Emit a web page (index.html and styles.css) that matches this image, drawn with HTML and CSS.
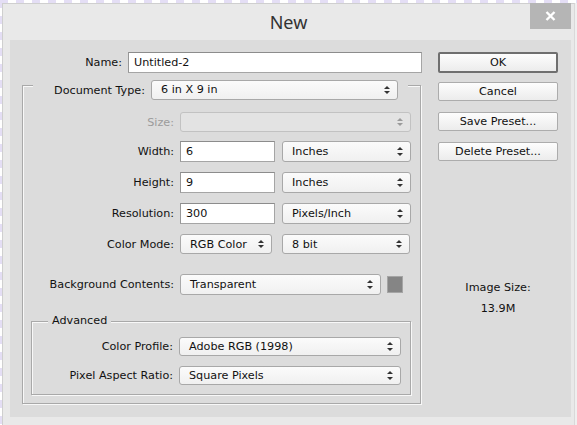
FILE: index.html
```html
<!DOCTYPE html>
<html lang="en">

<head>
    <meta charset="UTF-8">
    <meta name="viewport" content="width=device-width, initial-scale=1.0">
    <title>New</title>
    <link rel="stylesheet" href="styles.css">
</head>

<body>
    <div class="window">
        <div class="titlebar">
            <span></span>
            <h1 class="title">New</h1>
            <button class="close" type="button">
                <svg width="11" height="10" viewBox="0 0 11 10">
                    <path d="M1.5 1 L9.5 9 M9.5 1 L1.5 9" stroke="#fff" stroke-width="2.4" />
                </svg>
            </button>
        </div>

        <div class="panel">
            <div class="form">
                <div class="row name-row">
                    <label class="lbl">Name:</label>
                    <div class="input name-input">Untitled-2</div>
                </div>

                <div class="group">
                    <div class="row head-row">
                        <label class="lbl">Document Type:</label>
                        <div class="select doc-select">6 in X 9 in</div>
                    </div>

                    <div class="row size-row">
                        <label class="lbl muted">Size:</label>
                        <div class="select disabled w-full"></div>
                    </div>

                    <div class="row r-width">
                        <label class="lbl">Width:</label>
                        <div class="input num">6</div>
                        <div class="select unit">Inches</div>
                    </div>

                    <div class="row r-height">
                        <label class="lbl">Height:</label>
                        <div class="input num">9</div>
                        <div class="select unit">Inches</div>
                    </div>

                    <div class="row r-res">
                        <label class="lbl">Resolution:</label>
                        <div class="input num">300</div>
                        <div class="select unit">Pixels/Inch</div>
                    </div>

                    <div class="row r-mode">
                        <label class="lbl">Color Mode:</label>
                        <div class="select mode">RGB Color</div>
                        <div class="select bits">8 bit</div>
                    </div>

                    <div class="row r-bg">
                        <label class="lbl">Background Contents:</label>
                        <div class="select bg-select">Transparent</div>
                        <div class="swatch"></div>
                    </div>

                    <div class="group sub">
                        <div class="legend">Advanced</div>
                        <div class="row r-profile">
                            <label class="lbl">Color Profile:</label>
                            <div class="select adv">Adobe RGB (1998)</div>
                        </div>
                        <div class="row r-par">
                            <label class="lbl">Pixel Aspect Ratio:</label>
                            <div class="select adv">Square Pixels</div>
                        </div>
                    </div>
                </div>
            </div>

            <div class="side">
                <button class="btn default" type="button">OK</button>
                <button class="btn" type="button">Cancel</button>
                <button class="btn" type="button">Save Preset...</button>
                <button class="btn" type="button">Delete Preset...</button>

                <div class="info">
                    <p>Image Size:</p>
                    <p>13.9M</p>
                </div>
            </div>
        </div>
    </div>
</body>

</html>
```

FILE: styles.css
```css
* {
    box-sizing: border-box;
}

html,
body {
    margin: 0;
    padding: 0;
    height: 425px;
    overflow: hidden;
}

body {
    font-family: "DejaVu Sans", Tahoma, sans-serif;
    font-size: 11.2px;
    color: #111;
    background:
        repeating-linear-gradient(90deg, #e4def5 0 8px, #fff 8px 16px) top left / 100% 3px no-repeat,
        repeating-linear-gradient(180deg, #e4def5 0 8px, #fff 8px 16px) top left / 2px 100% no-repeat,
        #efefef;
}

.window {
    margin: 3px 0 0 2px;
    width: 573px;
    height: 422px;
    background: #e9e9e9;
    border-top: 1px solid #cfcfcf;
    border-left: 1px solid #cfcfcf;
    border-right: 1px solid #d9d9d9;
}

.titlebar {
    display: grid;
    grid-template-columns: 1fr auto 1fr;
    align-items: start;
    height: 36px;
}

.title {
    margin: 0;
    padding-top: 6px;
    font-family: "Noto Sans", sans-serif;
    font-size: 18px;
    font-weight: 400;
    color: #333;
    line-height: 24px;
}

.close {
    justify-self: end;
    margin: -1px 3px 0 0;
    width: 41px;
    height: 26px;
    border: 0;
    padding: 0;
    background: #b5b5b5;
    display: flex;
    align-items: center;
    justify-content: center;
}

.panel {
    display: flex;
    margin: 0 3px 0 7px;
    height: 377px;
    background: #dcdcdc;
}

.form {
    width: 412px;
    padding-top: 12px;
}

.row {
    display: flex;
    align-items: center;
    gap: 6px;
}

.lbl {
    flex: none;
    width: 151px;
    text-align: right;
    white-space: nowrap;
}

.lbl.muted {
    color: #9b9b9b;
}

.input {
    height: 21px;
    line-height: 19px;
    padding-left: 5px;
    background: #fff;
    border: 1px solid #a5a5a5;
    border-top-color: #8c8c8c;
    border-left-color: #979797;
}

.select {
    position: relative;
    height: 21px;
    line-height: 19px;
    padding-left: 9px;
    background: linear-gradient(#fbfbfb, #f0f0f0);
    border: 1px solid #a8a8a8;
    border-radius: 3px;
    white-space: nowrap;
}

/* little up/down arrows */
.select::before,
.select::after {
    content: "";
    position: absolute;
    right: 7px;
    border-left: 3px solid transparent;
    border-right: 3px solid transparent;
}

.select::before {
    top: 5px;
    border-bottom: 3px solid #333;
}

.select::after {
    bottom: 5px;
    border-top: 3px solid #333;
}

.select.disabled {
    background: #e3e3e3;
    border-color: #c2c2c2;
}

.select.disabled::before {
    border-bottom-color: #9a9a9a;
}

.select.disabled::after {
    border-top-color: #9a9a9a;
}

/* name + document type */
.name-row .lbl {
    width: 112px;
}

.name-input {
    width: 294px;
}

.group {
    margin: 12px 0 0 12px;
    width: 399px;
    height: 319px;
    border: 1px solid #a9a9a9;
    box-shadow: inset 1px 1px 0 #f8f8f8, 1px 1px 0 #f8f8f8;
}

.head-row {
    margin: -6px 0 0 10px;
    width: 375px;
    padding-right: 10px;
    background: #dcdcdc;
}

.head-row .lbl {
    width: 112px;
}

.doc-select {
    flex: 1;
    height: 20px;
    line-height: 18px;
}

.size-row {
    margin-top: 12px;
}

.size-row .select {
    height: 20px;
}

.w-full {
    width: 231px;
}

.r-width {
    margin-top: 9px;
}

.r-height,
.r-res,
.r-mode {
    margin-top: 10px;
}

.num {
    width: 95px;
}

.unit {
    width: 129px;
    margin-left: 1px;
}

.mode {
    width: 92px;
    height: 20px;
}

.bits {
    width: 128px;
    height: 20px;
    margin-left: 4px;
}

.r-bg {
    margin-top: 20px;
}

.bg-select {
    width: 201px;
}

.swatch {
    width: 16px;
    height: 17px;
    background: #858585;
    border: 1px solid #a5a5a5;
}

/* advanced box */
.group.sub {
    margin: 26px 0 0 8px;
    width: 380px;
    height: 74px;
}

.legend {
    width: fit-content;
    margin: -8px 0 0 16px;
    padding: 0 4px;
    line-height: 14px;
    background: #dcdcdc;
}

.sub .lbl {
    width: 141px;
}

.adv {
    width: 222px;
    height: 19px;
    line-height: 17px;
}

.adv::before {
    top: 4px;
}

.adv::after {
    bottom: 4px;
}

.r-profile {
    margin-top: 9px;
}

.r-par {
    margin-top: 10px;
}

/* buttons column */
.side {
    display: flex;
    flex-direction: column;
    margin-left: 16px;
    padding-top: 12px;
    width: 120px;
}

.btn {
    height: 19px;
    margin-bottom: 11px;
    padding: 0;
    font: inherit;
    color: #111;
    background: linear-gradient(#fdfdfd, #ececec);
    border: 1px solid #acacac;
    border-radius: 2px;
}

.btn.default {
    height: 21px;
    margin-bottom: 9px;
    border: 2px solid #6f6f6f;
}

.info {
    margin-top: 109px;
    text-align: center;
}

.info p {
    margin: 0 0 7px;
    line-height: 14px;
}
```
